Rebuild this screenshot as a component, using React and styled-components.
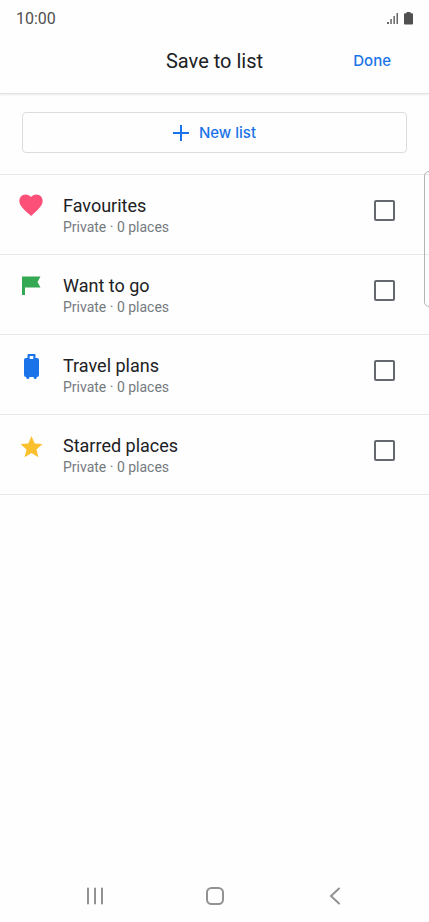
import React from "react";
import { useState } from "react";
import styled, { createGlobalStyle } from "styled-components";

const GlobalStyle = createGlobalStyle`
  :root {
    --point-color: #1a73e8;
    --text-color: #202124;
    --sub-color: #757a7f;
    --line-color: #e6e7e9;
    --nav-color: #929292;
  }

  * {
    box-sizing: border-box;
  }

  body {
    margin: 0;
    background: #fefefe;
    color: var(--text-color);
    font-family: Roboto, "Liberation Sans", sans-serif;
  }

  svg {
    display: block;
  }
`;

const Screen = styled.div`
  position: relative;
  display: flex;
  flex-direction: column;
  min-height: 100vh;
  overflow: hidden;
`;

const StatusBar = styled.div`
  display: flex;
  align-items: center;
  justify-content: space-between;
  height: 37px;
  padding: 0 16px;
  color: #505050;
  font-size: 16px;
  line-height: 20px;
`;

const StatusIcons = styled.div`
  display: flex;
  gap: 5px;
`;

const Header = styled.header`
  display: grid;
  grid-template-columns: 1fr auto 1fr;
  align-items: center;
  height: 57px;
  padding: 0 38px 8px;
  border-bottom: 1px solid #e2e2e2;
  box-shadow: 0 1px 2px rgba(0, 0, 0, 0.08);
`;

const Title = styled.h1`
  grid-column: 2;
  margin: 0;
  font-size: 20px;
  font-weight: 400;
  line-height: 24px;
`;

const TextButton = styled.button`
  padding: 0;
  border: 0;
  background: none;
  color: var(--point-color);
  font-family: Inter, Roboto, sans-serif;
  font-size: 15px;
  font-weight: 500;
  line-height: 24px;
  cursor: pointer;
`;

const DoneButton = styled(TextButton)`
  justify-self: end;
`;

const Content = styled.main`
  flex: 1;
  padding-top: 18px;
`;

const NewListButton = styled(TextButton)`
  display: flex;
  align-items: center;
  justify-content: center;
  gap: 10px;
  width: calc(100% - 44px);
  height: 41px;
  margin: 0 22px 21px;
  border: 1px solid #dadce0;
  border-radius: 4px;
`;

const List = styled.ul`
  margin: 0;
  padding: 0;
  border-top: 1px solid var(--line-color);
  list-style: none;
`;

const Row = styled.label`
  display: flex;
  align-items: flex-start;
  height: 80px;
  padding: 16px 34px 0 17px;
  border-bottom: 1px solid var(--line-color);
  cursor: pointer;
`;

const RowText = styled.div`
  flex: 1;
  padding-left: 18px;
`;

const Name = styled.div`
  padding-top: 3px;
  font-size: 18px;
  line-height: 24px;
`;

const Detail = styled.div`
  color: var(--sub-color);
  font-size: 14px;
  line-height: 18px;
`;

const CheckBox = styled.input`
  appearance: none;
  width: 21px;
  height: 21px;
  margin: 9px 0 0;
  border: 2px solid #65686d;
  border-radius: 2px;

  &:checked {
    border-color: var(--point-color);
    background: var(--point-color);
  }
`;

/* edge panel handle, lies over the list */
const EdgeHandle = styled.div`
  position: absolute;
  top: 171px;
  right: -8px;
  width: 13px;
  height: 136px;
  border: 1px solid #b4b4b4;
  border-radius: 5px;
`;

const NavBar = styled.nav`
  display: flex;
  align-items: center;
  justify-content: center;
  gap: 96px;
  height: 52px;
`;

const NavButton = styled.button`
  padding: 0;
  border: 0;
  background: none;
  color: var(--nav-color);
  cursor: pointer;
`;

const HeartIcon = () => (
  <svg width="28" height="28" viewBox="0 0 24 24" fill="#fc5079">
    <path d="M12 21.35l-1.45-1.32C5.4 15.36 2 12.28 2 8.5 2 5.42 4.42 3 7.5 3c1.74 0 3.41.81 4.5 2.09C13.09 3.81 14.76 3 16.5 3 19.58 3 22 5.42 22 8.5c0 3.78-3.4 6.86-8.55 11.54L12 21.35z" />
  </svg>
);

const FlagIcon = () => (
  <svg width="28" height="28" viewBox="0 0 28 28" fill="#34a853">
    <path d="M5 5.5h18.5l-3 5.5 3 5.5H8V24H5z" />
  </svg>
);

const SuitcaseIcon = () => (
  <svg width="28" height="28" viewBox="0 0 28 28" fill="#1a73e8">
    <path
      fillRule="evenodd"
      d="M11.5 3h6q1 0 1 1v3h1.5q2 0 2 2v15q0 2-2 2h-.3v.8q0 1.200-1.500 1.200t-1.500-1.200V26h-4.400v.8q0 1.200-1.500 1.200t-1.500-1.200V26H9q-2 0-2-2V9q0-2 2-2h1.500V4q0-1 1-1zM12.700 5v3h3.600V5z"
    />
  </svg>
);

const StarIcon = () => (
  <svg width="28" height="28" viewBox="0 0 28 28" fill="#fbc02d">
    <path d="M14.500 5l3.200 7.400 7.800.7-6 5.300 1.900 7.800-6.900-4.200-6.900 4.200 1.900-7.800-6-5.300 7.800-.7z" />
  </svg>
);

const lists = [
  { id: "favourites", name: "Favourites", icon: <HeartIcon /> },
  { id: "want", name: "Want to go", icon: <FlagIcon /> },
  { id: "travel", name: "Travel plans", icon: <SuitcaseIcon /> },
  { id: "starred", name: "Starred places", icon: <StarIcon /> },
];

const ListElement = props => {
  const { item, checked, onToggle } = props;

  return (
    <li>
      <Row htmlFor={item.id}>
        {item.icon}
        <RowText>
          <Name>{item.name}</Name>
          <Detail>Private · 0 places</Detail>
        </RowText>
        <CheckBox
          id={item.id}
          type="checkbox"
          checked={checked}
          onChange={() => onToggle(item.id)}
        />
      </Row>
    </li>
  );
};

const App = () => {
  const [selected, setSelected] = useState([]);

  const toggle = id => {
    setSelected(prev =>
      prev.includes(id) ? prev.filter(v => v !== id) : [...prev, id]
    );
  };

  return (
    <Screen>
      <GlobalStyle />
      <StatusBar>
        <span>10:00</span>
        <StatusIcons>
          <svg width="12" height="13" viewBox="0 0 12 13" fill="#666">
            <path d="M0 10h2v2H0zM3.300 7h1.500v5H3.300zM6.400 4h1.500v8H6.400zM9.500 1H11v11H9.500z" />
          </svg>
          <svg width="9" height="13" viewBox="0 0 9 13" fill="#505050">
            <path d="M2.500 0h4v1.200H8q1 0 1 1v9.300q0 1-1 1H1q-1 0-1-1V2.200q0-1 1-1h1.500z" />
          </svg>
        </StatusIcons>
      </StatusBar>
      <Header>
        <Title>Save to list</Title>
        <DoneButton type="button">Done</DoneButton>
      </Header>
      <Content>
        <NewListButton type="button">
          <svg width="16" height="16" viewBox="0 0 16 16" fill="currentColor">
            <path d="M7 0h2v7h7v2H9v7H7V9H0V7h7z" />
          </svg>
          New list
        </NewListButton>
        <List>
          {lists.map(i => (
            <ListElement
              key={i.id}
              item={i}
              checked={selected.includes(i.id)}
              onToggle={toggle}
            />
          ))}
        </List>
      </Content>
      <EdgeHandle />
      <NavBar>
        <NavButton type="button" aria-label="Recent apps">
          <svg width="24" height="24" viewBox="0 0 24 24" fill="none" stroke="currentColor" strokeWidth="2" strokeLinecap="round">
            <path d="M5 4.500v15M12 4.500v15M19 4.500v15" />
          </svg>
        </NavButton>
        <NavButton type="button" aria-label="Home">
          <svg width="24" height="24" viewBox="0 0 24 24" fill="none" stroke="currentColor" strokeWidth="2">
            <rect x="4" y="4" width="16" height="16" rx="4.500" />
          </svg>
        </NavButton>
        <NavButton type="button" aria-label="Back">
          <svg width="24" height="24" viewBox="0 0 24 24" fill="none" stroke="currentColor" strokeWidth="2" strokeLinecap="round">
            <path d="M16 4.500L8 12l8 7.500" />
          </svg>
        </NavButton>
      </NavBar>
    </Screen>
  );
};
export default App;
